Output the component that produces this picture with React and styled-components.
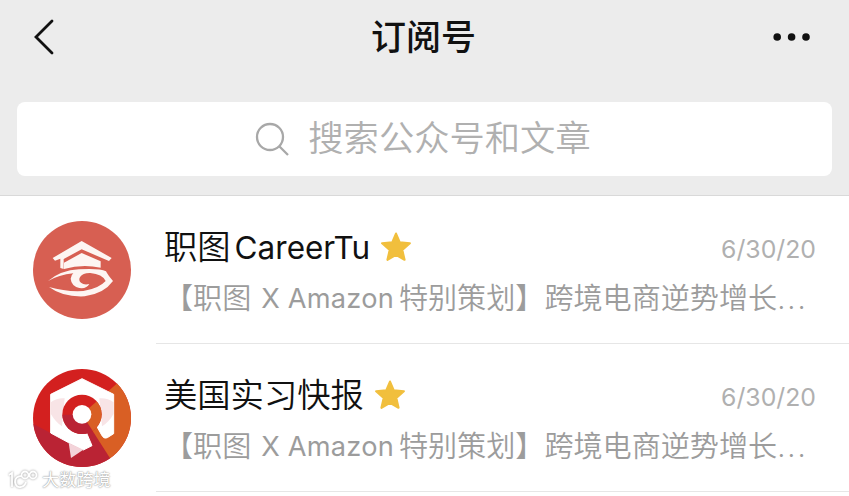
import React from "react";
import styled, { createGlobalStyle } from "styled-components";

const GlobalStyle = createGlobalStyle`
  * {
    box-sizing: border-box;
  }

  body {
    margin: 0;
    background-color: #fff;
    font-family: Inter, "Noto Sans CJK SC", sans-serif;
    overflow: hidden;
  }
`;

const Page = styled.div`
  position: relative;
  width: 849px;
  height: 496px;
  background-color: #fff;
  overflow: hidden;
`;

const Header = styled.header`
  height: 196px;
  background-color: #ececec;
  border-bottom: 1px solid #d9d9d9;
`;

const NavBar = styled.div`
  display: flex;
  align-items: center;
  justify-content: space-between;
  height: 73px;
  padding: 0 38px 0 33px;
`;

const NavButton = styled.button`
  display: flex;
  width: 40px;
  padding: 0;
  background: none;
  border: none;
  justify-content: ${props => props.$align || "flex-start"};
  cursor: pointer;
`;

const Title = styled.h1`
  margin: 0 0 0 3px;
  font-size: 35px;
  font-weight: 500;
  line-height: 50px;
  color: #111;
`;

const SearchBox = styled.div`
  display: flex;
  align-items: center;
  justify-content: center;
  height: 74px;
  margin: 29px 17px 0;
  padding-right: 3px;
  border-radius: 8px;
  background-color: #fff;
`;

const SearchLabel = styled.span`
  margin-left: 18px;
  font-size: 35.3px;
  font-weight: 350;
  line-height: 52px;
  color: #b0b0b0;
`;

const Row = styled.li`
  display: flex;
  height: 148px;
  padding-left: 33px;
`;

const List = styled.ul`
  margin: 0;
  padding: 0;
  list-style: none;
`;

const Avatar = styled.svg`
  flex: 0 0 auto;
  width: 98px;
  height: 98px;
  margin: 25px 25px 0 0;
`;

const RowBody = styled.div`
  flex: 1;
  height: 148px;
  padding: 27px 33px 0 8px;
  border-bottom: 1px solid #e6e6e6;
`;

const RowTop = styled.div`
  display: flex;
  align-items: center;
  height: 48px;
`;

const Name = styled.span`
  font-size: 33.3px;
  line-height: 48px;
  font-weight: 350;
  color: #111;
`;

const NameLatin = styled.span`
  margin-left: 4px;
  font-size: 31.5px;
  font-weight: 380;
`;

const Star = styled.svg`
  width: 32px;
  height: 32px;
  margin-left: 10px;
`;

const DateText = styled.span`
  margin-left: auto;
  padding-top: 4px;
  font-size: 24.8px;
  font-weight: 400;
  color: #b0b0b0;
`;

const Preview = styled.div`
  display: flex;
  height: 44px;
  margin-top: 6px;
  font-size: 29.1px;
  line-height: 44px;
  font-weight: 350;
  color: #9c9c9c;
  white-space: pre;
`;

const PreviewLatin = styled.span`
  margin: 0 5px 0 10px;
  font-size: 27.2px;
  font-weight: 400;
  letter-spacing: 0.2px;
`;

const Dots = styled.span`
  letter-spacing: 2px;
`;

const Watermark = styled.div`
  position: absolute;
  left: 8px;
  bottom: 4px;
  display: flex;
  align-items: center;
  gap: 3px;
  font-size: 17.2px;
  line-height: 24px;
  color: #fff;
  text-shadow: 0 0 2px #999, 0 0 1px #999;

  & > svg {
    filter: drop-shadow(0 0 1px #999);
  }
`;

const CareerLogo = () => (
  <Avatar viewBox="39 33 294 294">
    <circle cx="186" cy="180" r="147" fill="#d75f52" />
    <g fill="#fdf5f2">
      {/* roof */}
      <path d="M98 144 L185 93 L275 144 L267 153 L185 118 L131 147 L131 177 L121 174 L121 146 L105 152 Z" />
      <path d="M132 158 L185 129 L242 154 L242 173 Q186 162 132 177 Z" />
      {/* eye */}
      <path d="M84 213 Q122 181 177 178 Q238 174 258 184 Q264 196 279 213 Q252 251 194 259 Q129 262 87 231 Q138 246 190 243 Q236 236 257 213 Q247 192 211 189 C181 188 171 209 183 218 Q192 226 208 222 Q200 237 178 234 Q154 228 152 206 Q153 195 160 190 Q116 195 84 213 Z" />
    </g>
  </Avatar>
);

const InternLogo = () => (
  <Avatar viewBox="39 32 294 294">
    <defs>
      <clipPath id="disc">
        <circle cx="186" cy="179" r="147" />
      </clipPath>
      <clipPath id="ring">
        <circle cx="186" cy="168" r="59" />
      </clipPath>
    </defs>
    <g clipPath="url(#disc)">
      <rect x="39" y="32" width="294" height="294" fill="#d3201f" />
      <path d="M39 196 L92 224 L186 168 L272 302 L272 340 L39 340 Z" fill="#ba2334" />
      <path d="M186 168 L290 76 L350 60 L350 340 L296 340 Z" fill="#d95f24" />
      {/* hexagon bubble */}
      <path
        d="M186 61 L281 108 L281 226 L262 238 Q252 243 246 232 L228 200 L196 215 L216 262 L190 275 L146 253 L92 224 L92 108 Z"
        fill="#fff"
        stroke="#fff"
        strokeWidth="3"
        strokeLinejoin="round"
      />
      <path d="M146 253 L190 274 L153 299 Z" fill="#f3d3d9" />
      <path d="M92 132 Q112 118 134 120 L126 204 Q106 190 92 166 Z" fill="#f8e4e6" />
      <path d="M281 132 Q262 118 238 120 L246 204 Q268 190 281 166 Z" fill="#f8e4e6" />
      <g clipPath="url(#ring)">
        <rect x="120" y="100" width="130" height="130" fill="#d3201f" />
        <path d="M120 170 L186 168 L226 230 L120 230 Z" fill="#ba2334" />
        <path d="M186 168 L246 115 L260 230 L226 230 Z" fill="#d95f24" />
      </g>
      <circle cx="186" cy="168" r="28" fill="#fff" />
    </g>
  </Avatar>
);

const StarIcon = () => (
  <Star viewBox="0 0 30 30">
    <path
      d="M15 2.4 L18.5 10.7 L28 11.5 L20.9 17.8 L23 27 L15 22.3 L7 27 L9.1 17.8 L2 11.5 L11.5 10.7 Z"
      fill="#f1bf3d"
      stroke="#f1bf3d"
      strokeWidth="2"
      strokeLinejoin="round"
    />
  </Star>
);

const accounts = [
  { name: "职图", latin: "CareerTu", date: "6/30/20", Logo: CareerLogo },
  { name: "美国实习快报", date: "6/30/20", Logo: InternLogo }
];

const Account = ({ name, latin, date, Logo }) => (
  <Row>
    <Logo />
    <RowBody>
      <RowTop>
        <Name>
          {name}
          {latin && <NameLatin>{latin}</NameLatin>}
        </Name>
        <StarIcon />
        <DateText>{date}</DateText>
      </RowTop>
      <Preview>
        <span>【职图</span>
        <PreviewLatin>X Amazon</PreviewLatin>
        <span>特别策划】跨境电商逆势增长</span>
        <Dots>...</Dots>
      </Preview>
    </RowBody>
  </Row>
);

const App = () => (
  <Page>
    <GlobalStyle />
    <Header>
      <NavBar>
        <NavButton aria-label="返回">
          <svg width="22" height="36" viewBox="0 0 22 36" fill="none">
            <path d="M19 2 L3 18 L19 34" stroke="#111" strokeWidth="2.8" strokeLinecap="round" />
          </svg>
        </NavButton>
        <Title>订阅号</Title>
        <NavButton $align="flex-end" aria-label="更多">
          <svg width="38" height="8" viewBox="0 0 38 8" fill="#111">
            <circle cx="4.2" cy="4" r="3.8" />
            <circle cx="18.6" cy="4" r="3.8" />
            <circle cx="33" cy="4" r="3.8" />
          </svg>
        </NavButton>
      </NavBar>
      <SearchBox>
        <svg width="35" height="35" viewBox="0 0 35 35" fill="none" stroke="#a8a8a8" strokeWidth="2.3">
          <circle cx="15" cy="15" r="13" />
          <path d="M24 24 L33 33" />
        </svg>
        <SearchLabel>搜索公众号和文章</SearchLabel>
      </SearchBox>
    </Header>
    <List>
      {accounts.map(account => (
        <Account key={account.name} {...account} />
      ))}
    </List>
    <Watermark>
      <svg width="31" height="22" viewBox="0 0 31 22" fill="none" stroke="#fff" strokeWidth="1.8">
        <path d="M1 6 L4 4 L4 18" />
        <path d="M14 7 Q7 7 7 13 Q8 19 13 18 Q17 17 18 13" />
        <circle cx="17" cy="6" r="3.5" />
        <circle cx="25" cy="6" r="3.5" />
      </svg>
      大数跨境
    </Watermark>
  </Page>
);

export default App;
